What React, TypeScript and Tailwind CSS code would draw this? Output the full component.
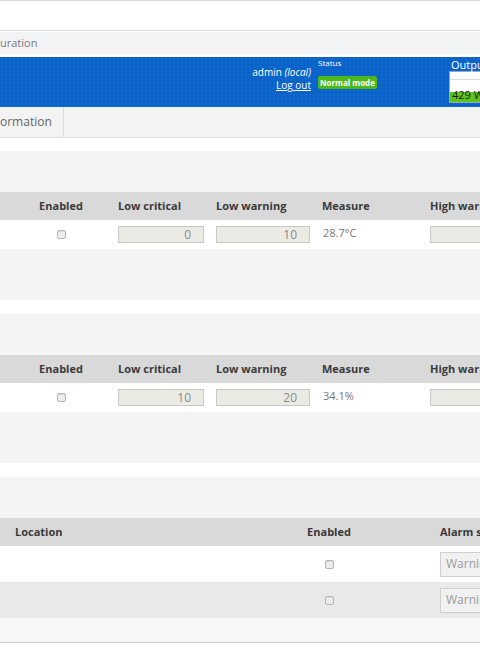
import React from "react";

const font = { fontFamily: '"Open Sans", "Noto Sans", sans-serif' };

function Checkbox() {
  return (
    <span className="inline-block h-[9px] w-[9px] rounded-[2px] border border-[#b5b5b5] bg-[#ececec] shadow-[inset_0_1px_1px_rgba(0,0,0,0.08)]" />
  );
}

function ValueBox({ value, width }: { value?: string; width: string }) {
  return (
    <div
      className={`${width} flex h-[17px] shrink-0 items-center justify-end border border-[#c8c8c4] bg-[#ebebe6] pr-[12px] text-[12px] text-[#8a8a8a]`}
    >
      {value}
    </div>
  );
}

function ThresholdPanel({ low, warn, measure }: { low: string; warn: string; measure: string }) {
  return (
    <section className="h-[149px] bg-[#f4f4f4] pt-[41px]">
      <div className="flex h-[28px] items-center bg-[#d9d9d9] text-[11px] font-bold text-[#3a3a3a]">
        <div className="w-[112px] shrink-0 pl-[10px] text-center">Enabled</div>
        <div className="w-[98px] shrink-0 pl-[6px]">Low critical</div>
        <div className="w-[106px] shrink-0 pl-[6px]">Low warning</div>
        <div className="w-[108px] shrink-0 pl-[6px]">Measure</div>
        <div className="shrink-0 whitespace-nowrap pl-[6px]">High warning</div>
      </div>
      <div className="flex h-[29px] items-center bg-white text-[11px] text-[#777]">
        <div className="flex w-[112px] shrink-0 justify-center pl-[10px]">
          <Checkbox />
        </div>
        <div className="w-[98px] shrink-0 pl-[6px]">
          <ValueBox value={low} width="w-[86px]" />
        </div>
        <div className="w-[106px] shrink-0 pl-[6px]">
          <ValueBox value={warn} width="w-[94px]" />
        </div>
        <div className="w-[108px] shrink-0 pb-[3px] pl-[7px]">{measure}</div>
        <div className="shrink-0 pl-[6px]">
          <ValueBox width="w-[90px]" />
        </div>
      </div>
    </section>
  );
}

function AlarmRow({ shaded }: { shaded?: boolean }) {
  return (
    <div className={`flex h-[36px] items-center ${shaded ? "bg-[#e9e9e9]" : "bg-white"}`}>
      <div className="w-[280px] shrink-0" />
      <div className="flex w-[98px] shrink-0 justify-center">
        <Checkbox />
      </div>
      <div className="shrink-0 pl-[62px]">
        <div className="flex h-[25px] w-[90px] items-center border border-[#cfcfcf] bg-[#f1f1f1] pl-[5px] text-[12px] text-[#9a9a9a]">
          Warning
        </div>
      </div>
    </div>
  );
}

export default function App() {
  return (
    <div className="h-[650px] w-[480px] overflow-hidden bg-white" style={font}>
      {/* top bar */}
      <div className="h-[31px] border-t border-b border-[#d6d6d6] bg-white" />
      <div className="mt-[1px] flex h-[22px] items-center bg-[#f2f3f4] text-[11px] text-[#7a7a7a]">
        uration
      </div>

      {/* blue header */}
      <header className="mt-[3px] flex h-[50px] bg-[#0a63c9] bg-[radial-gradient(rgba(255,255,255,0.03)_1px,transparent_1px)] bg-[length:4px_4px] text-white">
        <div className="flex-1" />
        <div className="flex shrink-0 flex-col items-end pt-[9px] text-[10px] leading-[13px]">
          <span>
            admin <i>(local)</i>
          </span>
          <span className="underline">Log out</span>
        </div>
        <div className="ml-[7px] w-[131px] shrink-0 pt-[1px]">
          <div className="text-[8px] leading-[10px]">Status</div>
          <span className="mt-[1px] inline-block rounded-[2px] bg-[#4cb81c] px-[2px] text-[8px] font-bold leading-[13px]">
            Normal mode
          </span>
        </div>
        <div className="w-[31px] shrink-0 pt-[1px]">
          <div className="whitespace-nowrap pl-[2px] text-[11px] leading-[13px]">Output</div>
          <div className="h-[32px] w-[40px] border border-[#9ab] bg-white">
            <div className="h-[8px] border-b border-[#ddd]" />
            <div className="relative mt-[12px] h-[10px] bg-[#5cc31c]">
              <span className="absolute left-[2px] top-[-4px] whitespace-nowrap text-[11px] leading-[13px] text-[#222]">
                429 W
              </span>
            </div>
          </div>
        </div>
      </header>

      {/* tabs */}
      <nav className="flex h-[31px] border-b border-[#dedede] bg-[#f3f3f3]">
        <div className="flex w-[64px] items-center border-r border-[#dcdcdc] text-[12px] text-[#666]">
          ormation
        </div>
      </nav>

      <div className="h-[13px]" />
      <ThresholdPanel low="0" warn="10" measure="28.7°C" />
      <div className="h-[14px]" />
      <ThresholdPanel low="10" warn="20" measure="34.1%" />
      <div className="h-[14px]" />

      {/* alarm inputs */}
      <section className="bg-[#f4f4f4] pt-[41px]">
        <div className="flex h-[28px] items-center bg-[#d9d9d9] text-[11px] font-bold text-[#3a3a3a]">
          <div className="w-[280px] shrink-0 pl-[15px]">Location</div>
          <div className="w-[98px] shrink-0 text-center">Enabled</div>
          <div className="shrink-0 whitespace-nowrap pl-[62px]">Alarm severity</div>
        </div>
        <AlarmRow />
        <AlarmRow shaded />
        <div className="h-[25px] border-b border-[#cfcfcf] bg-[#f7f7f7]" />
      </section>
    </div>
  );
}
